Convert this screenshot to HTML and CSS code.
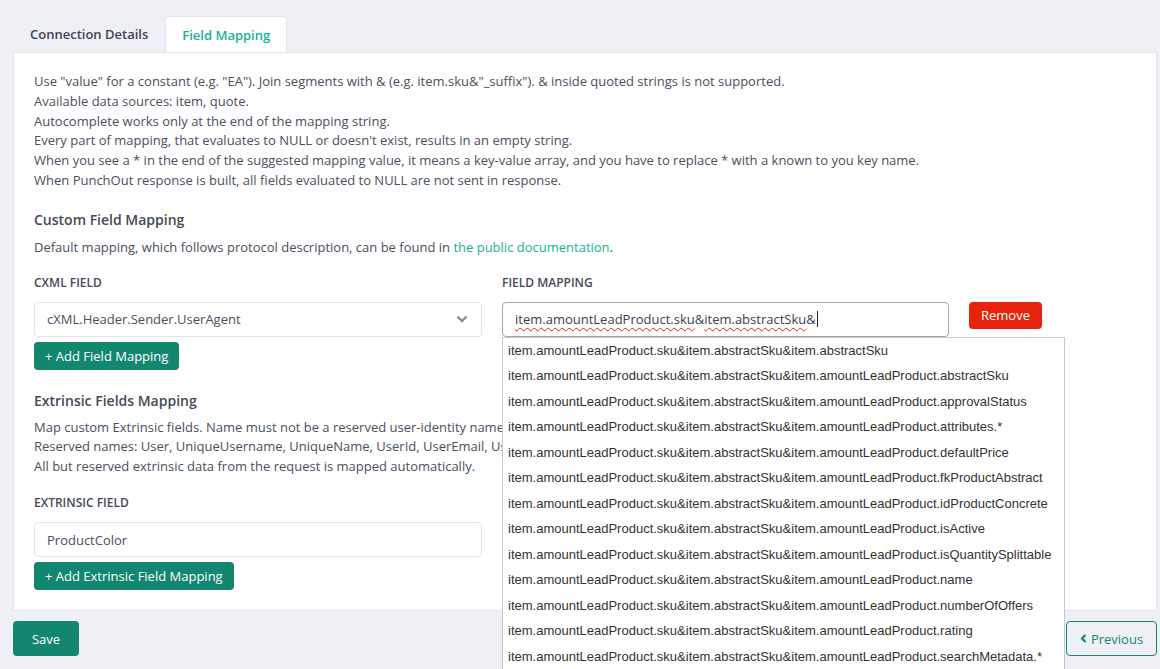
FILE: index.html
```html
<!DOCTYPE html>
<html lang="en">
<head>
  <meta charset="UTF-8">
  <meta name="viewport" content="width=device-width, initial-scale=1.0">
  <title>PunchOut Connection - Field Mapping</title>
  <link rel="stylesheet" href="styles.css">
</head>
<body>
  <div class="page">
    <nav class="tabs">
      <a class="tab" href="#">Connection Details</a>
      <a class="tab active" href="#">Field Mapping</a>
    </nav>
    <section class="panel">
      <div class="help">
        <p>Use "value" for a constant (e.g. "EA"). Join segments with &amp; (e.g. item.sku&amp;"_suffix"). &amp; inside quoted strings is not supported.</p>
        <p>Available data sources: item, quote.</p>
        <p>Autocomplete works only at the end of the mapping string.</p>
        <p>Every part of mapping, that evaluates to NULL or doesn't exist, results in an empty string.</p>
        <p>When you see a * in the end of the suggested mapping value, it means a key-value array, and you have to replace * with a known to you key name.</p>
        <p>When PunchOut response is built, all fields evaluated to NULL are not sent in response.</p>
      </div>

      <h3 class="section-title">Custom Field Mapping</h3>
      <p class="section-text">Default mapping, which follows protocol description, can be found in <a href="#">the public documentation</a>.</p>

      <div class="map-grid">
        <label class="field-label">cXML Field</label>
        <label class="field-label">Field Mapping</label>
        <span></span>

        <div class="select">
          <span>cXML.Header.Sender.UserAgent</span>
          <svg class="chevron" width="12" height="8" viewBox="0 0 12 8"><path d="M1.5 1.5 6 6l4.5-4.5" fill="none" stroke="#8a8d94" stroke-width="2.4"/></svg>
        </div>
        <div class="combo">
          <div class="input focused"><span class="typo">item.amountLeadProduct.sku</span>&amp;<span class="typo">item.abstractSku</span>&amp;<span class="caret"></span></div>
          <ul class="suggest">
            <li>item.amountLeadProduct.sku&amp;item.abstractSku&amp;item.abstractSku</li>
            <li>item.amountLeadProduct.sku&amp;item.abstractSku&amp;item.amountLeadProduct.abstractSku</li>
            <li>item.amountLeadProduct.sku&amp;item.abstractSku&amp;item.amountLeadProduct.approvalStatus</li>
            <li>item.amountLeadProduct.sku&amp;item.abstractSku&amp;item.amountLeadProduct.attributes.*</li>
            <li>item.amountLeadProduct.sku&amp;item.abstractSku&amp;item.amountLeadProduct.defaultPrice</li>
            <li>item.amountLeadProduct.sku&amp;item.abstractSku&amp;item.amountLeadProduct.fkProductAbstract</li>
            <li>item.amountLeadProduct.sku&amp;item.abstractSku&amp;item.amountLeadProduct.idProductConcrete</li>
            <li>item.amountLeadProduct.sku&amp;item.abstractSku&amp;item.amountLeadProduct.isActive</li>
            <li>item.amountLeadProduct.sku&amp;item.abstractSku&amp;item.amountLeadProduct.isQuantitySplittable</li>
            <li>item.amountLeadProduct.sku&amp;item.abstractSku&amp;item.amountLeadProduct.name</li>
            <li>item.amountLeadProduct.sku&amp;item.abstractSku&amp;item.amountLeadProduct.numberOfOffers</li>
            <li>item.amountLeadProduct.sku&amp;item.abstractSku&amp;item.amountLeadProduct.rating</li>
            <li>item.amountLeadProduct.sku&amp;item.abstractSku&amp;item.amountLeadProduct.searchMetadata.*</li>
          </ul>
        </div>
        <button class="btn btn-remove">Remove</button>
      </div>
      <button class="btn btn-add">+ Add Field Mapping</button>

      <h3 class="section-title extrinsic">Extrinsic Fields Mapping</h3>
      <div class="section-text tight">
        <p>Map custom Extrinsic fields. Name must not be a reserved user-identity name.</p>
        <p>Reserved names: User, UniqueUsername, UniqueName, UserId, UserEmail, UserPrintableName, FirstName, LastName.</p>
        <p>All but reserved extrinsic data from the request is mapped automatically.</p>
      </div>

      <div class="ext-col">
        <label class="field-label">Extrinsic Field</label>
        <div class="input">ProductColor</div>
      </div>
      <button class="btn btn-add">+ Add Extrinsic Field Mapping</button>
    </section>

    <footer class="actions">
      <button class="btn btn-save">Save</button>
      <button class="btn btn-prev">
        <svg class="prev-icon" width="7" height="9" viewBox="0 0 7 9"><path d="M5.5 1 2 4.5 5.5 8" fill="none" stroke="#13866f" stroke-width="2.2"/></svg>
        <span>Previous</span>
      </button>
    </footer>
  </div>
</body>
</html>
```

FILE: styles.css
```css
* {
  margin: 0;
  padding: 0;
  box-sizing: border-box;
}
html {
  height: 100%;
  overflow: hidden;
}
body {
  height: 100%;
  font-family: 'Open Sans', sans-serif;
  font-size: 13px;
  color: #4b505e;
  background-color: #eff0f5;
}
.page {
  width: 1144px;
  margin-left: 13px;
  padding-top: 16px;
}
.tabs {
  display: flex;
  height: 36px;
}
.tab {
  display: block;
  padding: 0 17px;
  line-height: 36px;
  font-weight: 600;
  color: #3e4452;
  text-decoration: none;
  border-radius: 4px 4px 0 0;
}
.tab.active {
  background-color: #fff;
  color: #19b394;
  border: 1px solid #e4e5ea;
  border-bottom: none;
  padding: 0 16px;
}
.panel {
  position: relative;
  background-color: #fff;
  border: 1px solid #e4e5ea;
  padding: 19px 20px 20px;
  height: 559px;
}
.help p {
  line-height: 19.8px;
}
.section-title {
  font-size: 14px;
  font-weight: 600;
  color: #454a58;
  line-height: 20px;
  margin-top: 19px;
}
.section-title.extrinsic {
  margin-top: 21px;
}
.section-text {
  line-height: 20px;
  margin-top: 7px;
}
.section-text.tight p {
  line-height: 19.5px;
}
.section-text a {
  color: #19b394;
  text-decoration: none;
}
.field-label {
  display: block;
  font-size: 12px;
  font-weight: 600;
  text-transform: uppercase;
  color: #454a58;
  line-height: 16px;
}
.map-grid {
  display: grid;
  grid-template-columns: 448px 447px auto;
  column-gap: 20px;
  row-gap: 11px;
  margin-top: 18px;
  align-items: start;
}
.select, .input {
  height: 35px;
  border: 1px solid #e4e5ea;
  border-radius: 4px;
  padding: 0 12px;
  display: flex;
  align-items: center;
  color: #4b505e;
  background-color: #fff;
  white-space: nowrap;
}
.select {
  justify-content: space-between;
}
.chevron {
  margin-right: 1px;
}
.combo {
  position: relative;
}
.input.focused {
  border-color: #a3a7ae;
  color: #3a3f4a;
}
.typo {
  text-decoration: underline wavy #e0241c;
  text-decoration-thickness: 1px;
  text-underline-offset: 3px;
}
.caret {
  display: inline-block;
  width: 1px;
  height: 16px;
  background-color: #222;
  margin-left: 1px;
}
.suggest {
  position: absolute;
  top: 35px;
  left: 0;
  width: 563px;
  list-style: none;
  background-color: #fff;
  border: 1px solid #c9c9c9;
  z-index: 5;
}
.suggest li {
  font-family: 'Liberation Sans', Arial, sans-serif;
  font-size: 13px;
  color: #333;
  line-height: 25.5px;
  padding: 0 5px;
  white-space: nowrap;
}
.btn {
  font-family: 'Open Sans', sans-serif;
  font-size: 13px;
  border: none;
  border-radius: 4px;
  cursor: pointer;
  color: #fff;
  background-color: #13866f;
}
.btn-add {
  display: block;
  height: 28px;
  padding: 0 11px;
  margin-top: 5px;
}
.btn-remove {
  height: 27px;
  width: 73px;
  background-color: #e8230b;
}
.ext-col {
  width: 448px;
  margin-top: 19px;
}
.ext-col .input {
  margin-top: 11px;
}
.actions {
  display: flex;
  justify-content: space-between;
  margin-top: 10px;
}
.btn-save {
  height: 35px;
  width: 66px;
}
.btn-prev {
  display: flex;
  align-items: center;
  justify-content: center;
  gap: 4px;
  height: 35px;
  width: 91px;
  background-color: transparent;
  color: #13866f;
  border: 1px solid #13866f;
}
```
